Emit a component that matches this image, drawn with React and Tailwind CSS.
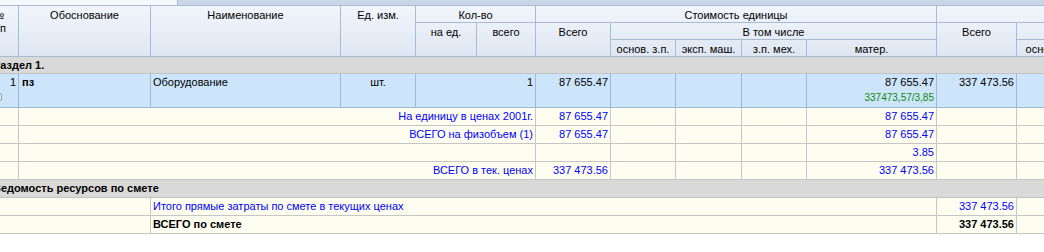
import React from 'react';

const cols =
  'grid grid-cols-[40px_132px_190px_75px_61px_59px_75px_65px_66px_65px_130px_80px_71px_66px_200px]';

const hd = 'border-r border-b border-[#a9bbd3] text-center pt-[3px] leading-[13px] whitespace-nowrap overflow-hidden';
const blue = 'border-r border-b border-[#a3b8d0] bg-[#cce5fb] pt-[2px] leading-[13px] whitespace-nowrap overflow-hidden';
const yel = 'border-r border-b border-[#c6c6c6] bg-[#fefef0] flex items-center leading-[13px] whitespace-nowrap overflow-hidden';
const sec = 'col-span-15 border-b border-[#c2c2c2] bg-[#d9d9d9] flex items-center pl-[14px] font-bold leading-[13px] whitespace-nowrap';

const summary = [
  { label: 'На единицу в ценах 2001г.', unit: '87 655.47', mat: '87 655.47' },
  { label: 'ВСЕГО на физобъем (1)', unit: '87 655.47', mat: '87 655.47' },
  { label: '', unit: '', mat: '3.85' },
  { label: 'ВСЕГО в тек. ценах', unit: '337 473.56', mat: '337 473.56' },
];

function SummaryRow({ row }) {
  return (
    <>
      <div className={yel}></div>
      <div className={`${yel} col-span-5 justify-end pr-[2px] text-[#0000ff]`}>{row.label}</div>
      <div className={`${yel} justify-end pr-[2px] text-[#0000ff]`}>{row.unit}</div>
      <div className={yel}></div>
      <div className={yel}></div>
      <div className={yel}></div>
      <div className={`${yel} justify-end pr-[2px] text-[#0000ff]`}>{row.mat}</div>
      <div className={yel}></div>
      <div className={yel}></div>
      <div className={yel}></div>
      <div className={yel}></div>
    </>
  );
}

export default function App() {
  return (
    <div className="w-[1044px] h-[252px] overflow-hidden bg-white text-[11px] text-black font-['Liberation_Sans',Arial,sans-serif]">
      <div className="flex h-[5px]">
        <div className="w-[177px] bg-[#f5f8fc]"></div>
        <div className="flex-1 border-l border-[#a8b8cc] bg-[#c9d6e7]"></div>
      </div>

      <div className="ml-[-21px] w-max">
        {/* header */}
        <div className={`${cols} grid-rows-[17px_17px_17px] border-t border-[#a9bbd3] bg-gradient-to-b from-[#f2f6fc] to-[#dde6f2]`}>
          <div className={`${hd} col-start-1 row-start-1 row-span-3`}>
            <div>№</div>
            <div>п/п</div>
          </div>
          <div className={`${hd} col-start-2 row-start-1 row-span-3`}>Обоснование</div>
          <div className={`${hd} col-start-3 row-start-1 row-span-3`}>Наименование</div>
          <div className={`${hd} col-start-4 row-start-1 row-span-3`}>Ед. изм.</div>
          <div className={`${hd} col-start-5 col-span-2 row-start-1`}>Кол-во</div>
          <div className={`${hd} col-start-5 row-start-2 row-span-2`}>на ед.</div>
          <div className={`${hd} col-start-6 row-start-2 row-span-2`}>всего</div>
          <div className={`${hd} col-start-7 col-span-5 row-start-1`}>Стоимость единицы</div>
          <div className={`${hd} col-start-7 row-start-2 row-span-2`}>Всего</div>
          <div className={`${hd} col-start-8 col-span-4 row-start-2`}>В том числе</div>
          <div className={`${hd} col-start-8 row-start-3`}>основ. з.п.</div>
          <div className={`${hd} col-start-9 row-start-3`}>эксп. маш.</div>
          <div className={`${hd} col-start-10 row-start-3`}>з.п. мех.</div>
          <div className={`${hd} col-start-11 row-start-3`}>матер.</div>
          <div className={`${hd} col-start-12 col-span-4 row-start-1`}></div>
          <div className={`${hd} col-start-12 row-start-2 row-span-2`}>Всего</div>
          <div className={`${hd} col-start-13 col-span-3 row-start-2`}></div>
          <div className={`${hd} col-start-13 row-start-3`}>основ. з.п.</div>
          <div className={`${hd} col-start-14 row-start-3`}>эксп. маш.</div>
          <div className={`${hd} col-start-15 row-start-3`}>з.п. мех.</div>
        </div>

        {/* body */}
        <div className={`${cols} grid-rows-[17px_34px_18px_18px_18px_18px_18px_18px_18px]`}>
          <div className={sec}>Раздел 1.</div>

          <div className={`${blue} relative text-right pr-[2px]`}>
            1
            <span className="absolute left-[15px] top-[19px] w-[8px] h-[8px] rounded-[2px] border border-[#8a9bb0] bg-[#eef4fb]"></span>
          </div>
          <div className={`${blue} pl-[3px] font-bold`}>пз</div>
          <div className={`${blue} pl-[2px]`}>Оборудование</div>
          <div className={`${blue} text-center`}>шт.</div>
          <div className={`${blue} col-span-2 text-right pr-[2px]`}>1</div>
          <div className={`${blue} text-right pr-[2px]`}>87 655.47</div>
          <div className={blue}></div>
          <div className={blue}></div>
          <div className={blue}></div>
          <div className={`${blue} text-right pr-[2px]`}>
            <div>87 655.47</div>
            <div className="mt-[2px] text-[10px] text-[#108a10]">337473,57/3,85</div>
          </div>
          <div className={`${blue} text-right pr-[2px]`}>337 473.56</div>
          <div className={blue}></div>
          <div className={blue}></div>
          <div className={blue}></div>

          {summary.map((row, i) => (
            <SummaryRow key={i} row={row} />
          ))}

          <div className={sec}>Ведомость ресурсов по смете</div>

          <div className={`${yel} col-span-2`}></div>
          <div className={`${yel} col-span-9 pl-[2px] text-[#0000ff]`}>Итого прямые затраты по смете в текущих ценах</div>
          <div className={`${yel} justify-end pr-[2px] text-[#0000ff]`}>337 473.56</div>
          <div className={`${yel} col-span-3`}></div>

          <div className={`${yel} col-span-2`}></div>
          <div className={`${yel} col-span-9 pl-[2px] font-bold`}>ВСЕГО по смете</div>
          <div className={`${yel} justify-end pr-[2px] font-bold`}>337 473.56</div>
          <div className={`${yel} col-span-3`}></div>
        </div>
      </div>
    </div>
  );
}
